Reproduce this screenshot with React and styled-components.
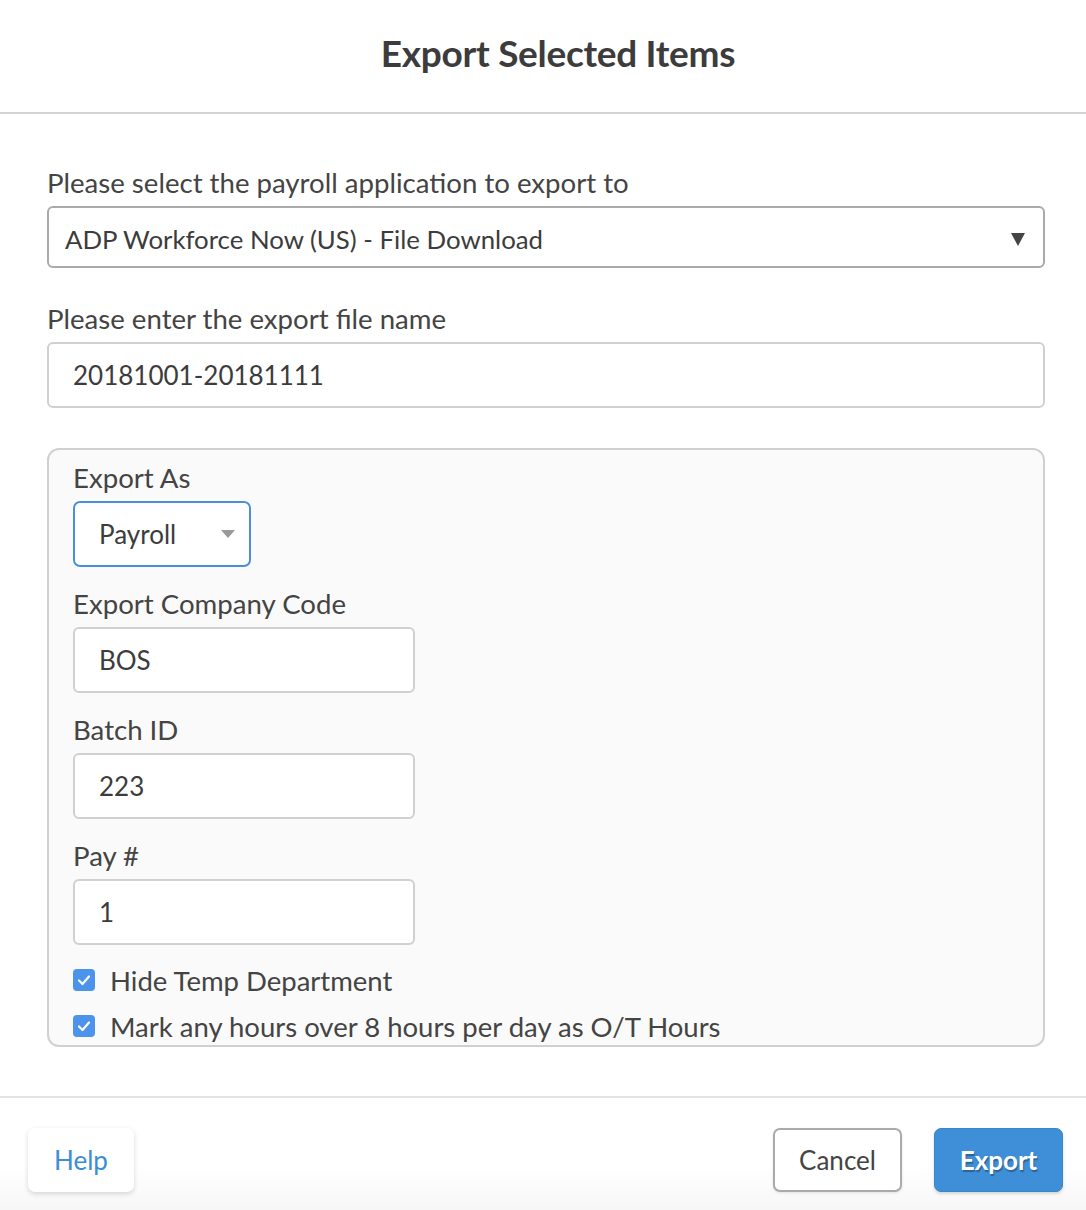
import React from "react";
import styled, { createGlobalStyle } from "styled-components";

const Global = createGlobalStyle`
  html, body { margin: 0; padding: 0; background: #fff; }
  body { font-family: Lato, "Open Sans", sans-serif; color: #444; }
  * { box-sizing: border-box; }
`;

const Page = styled.div`
  width: 1086px;
  height: 1210px;
  display: flex;
  flex-direction: column;
  background: #fff;
`;

const Header = styled.header`
  height: 114px;
  border-bottom: 2px solid #d4d4d4;
  display: flex;
  align-items: center;
  justify-content: center;
  padding: 0 0 8px 30px;
`;

const Title = styled.h1`
  margin: 0;
  font-size: 37px;
  font-weight: 700;
  color: #3c3c3c;
  letter-spacing: -0.3px;
`;

const Body = styled.main`
  flex: 1;
  padding: 52px 41px 0 47px;
  display: flex;
  flex-direction: column;
`;

const Label = styled.label`
  display: block;
  font-size: 27.6px;
  line-height: 34px;
  color: #444;
  margin-bottom: ${(p) => p.$mb || 6}px;
`;

const Field = styled.div`
  margin-bottom: ${(p) => p.$mb || 0}px;
`;

const SelectBox = styled.div`
  height: 62px;
  border: 2px solid #aaa;
  border-radius: 6px;
  display: flex;
  align-items: center;
  justify-content: space-between;
  padding: 4px 18px 0 16px;
  font-size: 25.8px;
  color: #3c3c3c;
  background: #fff;
`;

const Caret = styled.span`
  width: 0;
  height: 0;
  border-left: 7px solid transparent;
  border-right: 7px solid transparent;
  border-top: ${(p) => p.$h || 13}px solid ${(p) => p.$color || "#444"};
`;

const Input = styled.div`
  height: 66px;
  width: ${(p) => p.$w || "100%"};
  border: 2px solid #d0d0d0;
  border-radius: 6px;
  display: flex;
  align-items: center;
  padding-left: 24px;
  font-size: 26px;
  color: #3c3c3c;
  background: #fff;
`;

const Panel = styled.section`
  background: #fafafa;
  border: 2px solid #d0d0d0;
  border-radius: 12px;
  padding: 11px 24px 0 24px;
  height: 599px;
  overflow: hidden;
`;

const SmallSelect = styled.div`
  width: 178px;
  height: 66px;
  border: 2px solid #4a90d9;
  border-radius: 7px;
  display: flex;
  align-items: center;
  justify-content: space-between;
  padding: 0 14px 0 24px;
  font-size: 26px;
  color: #3c3c3c;
  background: #fff;
`;

const CheckRow = styled.div`
  display: flex;
  align-items: center;
  gap: 15px;
  height: 46px;
  font-size: 27.5px;
  color: #444;
  margin-top: ${(p) => p.$mt || 0}px;
`;

const Box = styled.span`
  width: 22px;
  height: 22px;
  border-radius: 4px;
  background: #4c93ec;
  display: flex;
  align-items: center;
  justify-content: center;
  flex: none;
`;

const Footer = styled.footer`
  height: 114px;
  border-top: 2px solid #e4e4e4;
  background: linear-gradient(#fff 60%, #f7f7f7);
  display: flex;
  align-items: flex-start;
  padding: 30px 23px 0 28px;
  gap: 32px;
`;

const Button = styled.button`
  height: 64px;
  min-width: ${(p) => p.$w}px;
  border-radius: 7px;
  font-family: Lato, sans-serif;
  font-size: 26px;
  cursor: pointer;
  padding: 0;
  ${(p) =>
    p.$variant === "help" &&
    `background:#fff;border:none;color:#3a8ed8;box-shadow:0 2px 5px rgba(0,0,0,0.15);margin-right:auto;`}
  ${(p) =>
    p.$variant === "cancel" &&
    `background:#fff;border:2px solid #aaa;color:#444;box-shadow:0 1px 3px rgba(0,0,0,0.1);`}
  ${(p) =>
    p.$variant === "primary" &&
    `background:#3e8fd8;border:1px solid #3a86cc;color:#fff;font-weight:700;text-shadow:1px 2px 1px rgba(0,0,0,0.3);box-shadow:0 2px 3px rgba(0,0,0,0.15);`}
`;

const Check = () => (
  <svg width="14" height="12" viewBox="0 0 14 12">
    <path d="M2 6.5 L5.5 10 L12 2.5" fill="none" stroke="#fff" strokeWidth="2.2" strokeLinecap="round" strokeLinejoin="round" />
  </svg>
);

export default function App() {
  return (
    <Page>
      <Global />
      <Header>
        <Title>Export Selected Items</Title>
      </Header>
      <Body>
        <Field $mb={34}>
          <Label>Please select the payroll application to export to</Label>
          <SelectBox>
            <span>ADP Workforce Now (US) - File Download</span>
            <Caret />
          </SelectBox>
        </Field>
        <Field $mb={40}>
          <Label>Please enter the export file name</Label>
          <Input>20181001-20181111</Input>
        </Field>
        <Panel>
          <Field $mb={20}>
            <Label>Export As</Label>
            <SmallSelect>
              <span>Payroll</span>
              <Caret $color="#999" $h={8} />
            </SmallSelect>
          </Field>
          <Field $mb={20}>
            <Label>Export Company Code</Label>
            <Input $w="342px">BOS</Input>
          </Field>
          <Field $mb={20}>
            <Label>Batch ID</Label>
            <Input $w="342px">223</Input>
          </Field>
          <Field $mb={12}>
            <Label>Pay #</Label>
            <Input $w="342px">1</Input>
          </Field>
          <CheckRow>
            <Box><Check /></Box>
            Hide Temp Department
          </CheckRow>
          <CheckRow>
            <Box><Check /></Box>
            Mark any hours over 8 hours per day as O/T Hours
          </CheckRow>
        </Panel>
      </Body>
      <Footer>
        <Button $variant="help" $w={106}>Help</Button>
        <Button $variant="cancel" $w={129}>Cancel</Button>
        <Button $variant="primary" $w={129}>Export</Button>
      </Footer>
    </Page>
  );
}
